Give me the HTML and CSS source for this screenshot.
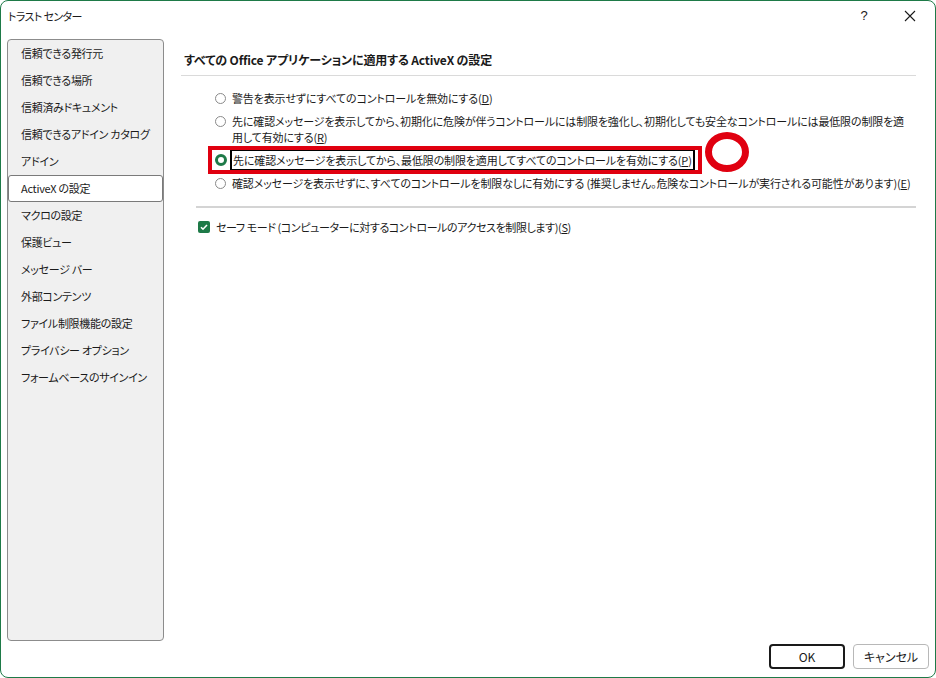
FILE: index.html
```html
<!DOCTYPE html>
<html lang="ja">
<head>
<meta charset="utf-8">
<link rel="stylesheet" href="styles.css">
</head>
<body>

<div class="window">

  <div class="titlebar">
    <span class="title">トラスト センター</span>
    <span class="help">?</span>
    <span class="close">
      <svg width="12" height="12" viewBox="0 0 12 12"><path d="M1 1 L11 11 M11 1 L1 11" stroke="#1a1a1a" stroke-width="1.1" fill="none"/></svg>
    </span>
  </div>

  <div class="content">

    <ul class="sidebar">
      <li>信頼できる発行元</li>
      <li>信頼できる場所</li>
      <li>信頼済みドキュメント</li>
      <li>信頼できるアドイン カタログ</li>
      <li>アドイン</li>
      <li class="active">ActiveX の設定</li>
      <li>マクロの設定</li>
      <li>保護ビュー</li>
      <li>メッセージ バー</li>
      <li>外部コンテンツ</li>
      <li>ファイル制限機能の設定</li>
      <li>プライバシー オプション</li>
      <li>フォームベースのサインイン</li>
    </ul>

    <div class="main">
      <h2 class="heading">すべての Office アプリケーションに適用する ActiveX の設定</h2>

      <div class="options">
        <div class="opt">
          <span class="radio"></span>
          <span class="label">警告を表示せずにすべてのコントロールを無効にする(<u>D</u>)</span>
        </div>
        <div class="opt">
          <span class="radio"></span>
          <span class="label">先に確認メッセージを表示してから、初期化に危険が伴うコントロールには制限を強化し、初期化しても安全なコントロールには最低限の制限を適<br>用して有効にする(<u>R</u>)</span>
        </div>
        <div class="opt">
          <span class="radio checked"></span>
          <span class="label focus">先に確認メッセージを表示してから、最低限の制限を適用してすべてのコントロールを有効にする(<u>P</u>)</span>
          <span class="mark-box"></span>
          <span class="mark-circle"></span>
        </div>
        <div class="opt">
          <span class="radio"></span>
          <span class="label">確認メッセージを表示せずに、すべてのコントロールを制限なしに有効にする (推奨しません。危険なコントロールが実行される可能性があります)(<u>E</u>)</span>
        </div>
      </div>

      <div class="sep"></div>

      <div class="check-row">
        <span class="checkbox">
          <svg width="12" height="12" viewBox="0 0 12 12"><path d="M3 6.2 L5 8.2 L9 4" stroke="#fff" stroke-width="1.6" fill="none"/></svg>
        </span>
        <span class="label safe">セーフ モード (コンピューターに対するコントロールのアクセスを制限します)(<u>S</u>)</span>
      </div>
    </div>

  </div>

  <div class="footer">
    <button class="btn btn-ok">OK</button>
    <button class="btn">キャンセル</button>
  </div>

</div>

</body>
</html>
```

FILE: styles.css
```css
html, body {
  margin: 0;
  padding: 0;
  background: #ffffff;
}

body {
  font-family: "Noto Sans CJK JP", "Noto Sans", sans-serif;
  font-size: 11px;
  letter-spacing: -0.3px;
  color: #1a1a1a;
  font-feature-settings: "palt";
}

.window {
  width: 936px;
  height: 678px;
  box-sizing: border-box;
  border: 1px solid #1e7a48;
  border-radius: 8px;
  display: flex;
  flex-direction: column;
  background: #fff;
  overflow: hidden;
}

/* title bar */
.titlebar {
  height: 29px;
  display: flex;
  align-items: center;
  padding-left: 7px;
}

.title {
  flex: 1;
  font-size: 11px;
  letter-spacing: -0.6px;
}

.help {
  width: 14px;
  font-size: 13px;
  font-family: "Liberation Sans", sans-serif;
  margin-right: 33px;
  text-align: center;
}

.close {
  display: flex;
  margin-right: 19px;
}

/* content */
.content {
  flex: 1;
  display: flex;
  padding: 9px 19px 0 6px;
  min-height: 0;
}

.sidebar {
  list-style: none;
  margin: 0;
  padding: 0;
  width: 157px;
  box-sizing: border-box;
  height: 602px;
  background: #f0f0f0;
  border: 1px solid #8c8c8c;
  border-radius: 4px;
}

.sidebar li {
  height: 27px;
  line-height: 27px;
  padding-left: 13px;
  white-space: nowrap;
}

.sidebar li.active {
  background: #fff;
  border: 1px solid #7a7a7a;
  border-radius: 3px;
  height: 25px;
  line-height: 25px;
  padding-left: 12px;
}

.main {
  flex: 1;
  padding-left: 17px;
}

.heading {
  margin: 0;
  padding: 13px 0 7px 3px;
  font-size: 12px;
  font-weight: bold;
  letter-spacing: -0.15px;
  line-height: 16px;
  border-bottom: 1px solid #dadada;
}

.options {
  padding: 14px 0 0 34px;
  letter-spacing: -0.15px;
}

.opt {
  position: relative;
  display: flex;
  align-items: flex-start;
  line-height: 16px;
  margin-bottom: 7px;
}

.radio {
  width: 11px;
  height: 11px;
  box-sizing: border-box;
  border: 1px solid #8a8a8a;
  border-radius: 50%;
  margin-top: 3px;
  margin-right: 6px;
  flex: none;
}

.radio.checked {
  border: 3px solid #1e7a48;
  width: 12px;
  height: 12px;
  margin-top: 2px;
}

.label {
  white-space: nowrap;
}

.focus {
  outline: 2px solid #000;
  outline-offset: 1px;
}

/* red annotation over the selected option */
.mark-box {
  position: absolute;
  left: -7px;
  top: -6px;
  width: 494px;
  height: 28px;
  box-sizing: border-box;
  border: 4px solid #e00010;
}

.mark-circle {
  position: absolute;
  left: 490px;
  top: -20px;
  width: 44px;
  height: 40px;
  box-sizing: border-box;
  border: 7px solid #e00010;
  border-radius: 50%;
}

.sep {
  margin: 15px 0 0 15px;
  height: 2px;
  background: #d4d4d4;
}

.check-row {
  display: flex;
  align-items: center;
  padding: 11px 0 0 17px;
  line-height: 16px;
}

.safe {
  letter-spacing: -0.4px;
}

.checkbox {
  width: 12px;
  height: 12px;
  background: #1e7a48;
  border-radius: 2px;
  margin-right: 6px;
  display: flex;
}

/* footer buttons */
.footer {
  height: 36px;
  display: flex;
  justify-content: flex-end;
  align-items: flex-start;
  padding: 3px 6px 0 0;
  box-sizing: border-box;
  gap: 8px;
}

.btn {
  width: 76px;
  height: 25px;
  background: #fff;
  border: 1px solid #b8b8b8;
  border-radius: 4px;
  font-family: "Noto Sans CJK JP", "Noto Sans", sans-serif;
  font-size: 12px;
  color: #1a1a1a;
  font-feature-settings: "palt";
  padding: 0;
}

.btn-ok {
  border: 2px solid #1a1a1a;
}
```
